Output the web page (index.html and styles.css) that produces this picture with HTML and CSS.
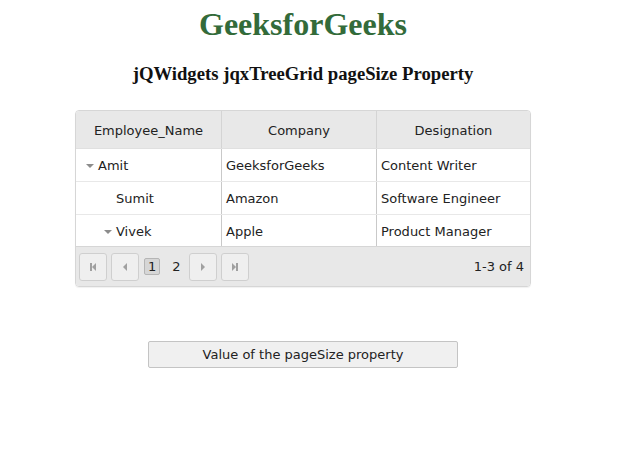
FILE: index.html
```html
<!DOCTYPE html>
<html>
<head>
<meta charset="utf-8">
<link rel="stylesheet" href="styles.css">
</head>
<body>
<div class="page">
  <h1 class="title">GeeksforGeeks</h1>
  <h3 class="subtitle">jQWidgets jqxTreeGrid pageSize Property</h3>
  <div class="grid">
    <div class="row head">
      <div class="cell hcell">Employee_Name</div>
      <div class="cell hcell">Company</div>
      <div class="cell hcell last">Designation</div>
    </div>
    <div class="row">
      <div class="cell name"><span class="tri"></span>Amit</div>
      <div class="cell">GeeksforGeeks</div>
      <div class="cell last">Content Writer</div>
    </div>
    <div class="row">
      <div class="cell name lvl1">Sumit</div>
      <div class="cell">Amazon</div>
      <div class="cell last">Software Engineer</div>
    </div>
    <div class="row lastrow">
      <div class="cell name lvl1b"><span class="tri"></span>Vivek</div>
      <div class="cell">Apple</div>
      <div class="cell last">Product Manager</div>
    </div>
    <div class="pager">
      <div class="pbtn">
        <svg width="10" height="10" viewBox="0 0 10 10"><rect x="2" y="1" width="2" height="8" fill="#a0a0a0"/><path d="M8 1 L4 5 L8 9 Z" fill="#a0a0a0"/></svg>
      </div>
      <div class="pbtn">
        <svg width="10" height="10" viewBox="0 0 10 10"><path d="M7 1 L3 5 L7 9 Z" fill="#a0a0a0"/></svg>
      </div>
      <span class="pnum current">1</span>
      <span class="pnum second">2</span>
      <div class="pbtn next">
        <svg width="10" height="10" viewBox="0 0 10 10"><path d="M3 1 L7 5 L3 9 Z" fill="#a0a0a0"/></svg>
      </div>
      <div class="pbtn">
        <svg width="10" height="10" viewBox="0 0 10 10"><path d="M2 1 L6 5 L2 9 Z" fill="#a0a0a0"/><rect x="6" y="1" width="2" height="8" fill="#a0a0a0"/></svg>
      </div>
      <span class="pinfo">1-3 of 4</span>
    </div>
  </div>
  <button class="valbtn">Value of the pageSize property</button>
</div>
</body>
</html>
```
FILE: styles.css
```css
body {
  margin: 0;
  background: #fff;
}
.page {
  width: 590px;
  margin-left: 8px;
  padding-top: 6px;
  display: flex;
  flex-direction: column;
  align-items: center;
  font-family: "DejaVu Sans", Verdana, sans-serif;
}
.title {
  margin: 0;
  font-family: "Liberation Serif", "Times New Roman", serif;
  font-size: 32px;
  font-weight: bold;
  color: #336b3a;
  line-height: 37px;
}
.subtitle {
  margin: 20px 0 0 0;
  font-family: "Liberation Serif", "Times New Roman", serif;
  font-size: 18.7px;
  font-weight: bold;
  color: #111;
  line-height: 22px;
}
.grid {
  margin-top: 25px;
  width: 456px;
  border: 1px solid #d6d6d6;
  border-radius: 4px;
  overflow: hidden;
  box-sizing: border-box;
  box-shadow: 0 1px 1px rgba(0,0,0,0.06);
  font-size: 13px;
  color: #222;
}
.row {
  display: grid;
  grid-template-columns: 146px 155px 1fr;
  height: 33px;
  border-bottom: 1px solid #e8e8e8;
  box-sizing: border-box;
}
.row.head {
  height: 38px;
  background: #e8e8e8;
  border-bottom: 1px solid #e0e0e0;
}
.row.lastrow {
  height: 32px;
  border-bottom: 1px solid #d6d6d6;
}
.cell {
  border-right: 1px solid #c9c9c9;
  display: flex;
  align-items: center;
  padding-left: 4px;
  padding-top: 1px;
  white-space: nowrap;
}
.cell.last {
  border-right: none;
}
.hcell {
  justify-content: center;
  padding-left: 0;
  border-right: 1px solid #d4d4d4;
}
.name {
  padding-left: 10px;
}
.name.lvl1 {
  padding-left: 40px;
}
.name.lvl1b {
  padding-left: 28px;
}
.tri {
  display: inline-block;
  width: 0;
  height: 0;
  border-left: 4px solid transparent;
  border-right: 4px solid transparent;
  border-top: 4px solid #8c8c8c;
  margin-right: 4px;
  margin-top: 1px;
}
.pager {
  height: 39px;
  background: #e8e8e8;
  display: flex;
  align-items: center;
  padding-left: 3px;
  padding-right: 6px;
}
.pbtn {
  width: 28px;
  height: 28px;
  box-sizing: border-box;
  border: 1px solid #cfcfcf;
  border-radius: 3px;
  background: #efefef;
  display: flex;
  align-items: center;
  justify-content: center;
  margin-right: 4px;
}
.pbtn.next {
  margin-left: 4px;
}
.pnum {
  font-size: 13px;
  margin-left: 1px;
  padding: 0 3px;
  line-height: 15px;
  height: 17px;
  box-sizing: border-box;
  border: 1px solid transparent;
  border-radius: 2px;
}
.pnum.second {
  margin-left: 8px;
}
.pnum.current {
  background: #d6d6d6;
  border-color: #b5b5b5;
}
.pinfo {
  margin-left: auto;
  font-size: 13px;
}
.valbtn {
  margin-top: 54px;
  width: 310px;
  height: 27px;
  border: 1px solid #c4c4c4;
  border-radius: 2px;
  background: #f0f0f0;
  font-family: "DejaVu Sans", Verdana, sans-serif;
  font-size: 13px;
  color: #222;
  padding: 0;
}
```
